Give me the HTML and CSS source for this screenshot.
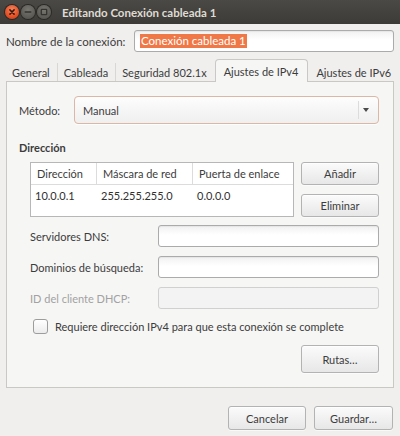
FILE: index.html
```html
<!DOCTYPE html>
<html lang="es">
<head>
<meta charset="utf-8">
<title>Editando Conexión cableada 1</title>
<link rel="stylesheet" href="styles.css">
</head>
<body>
<div class="window">
  <header class="titlebar">
    <div class="wbtns">
      <span class="wbtn close"><svg width="14" height="14" viewBox="0 0 14 14"><path d="M4.9 4.9l4.2 4.2M9.1 4.9l-4.2 4.2" stroke="#3a160a" stroke-width="1.5" stroke-linecap="round"/></svg></span>
      <span class="wbtn min"><svg width="14" height="14" viewBox="0 0 14 14"><path d="M4.3 7h5.4" stroke="#34332f" stroke-width="1.6" stroke-linecap="round"/></svg></span>
      <span class="wbtn max"><svg width="14" height="14" viewBox="0 0 14 14"><rect x="4.3" y="4.3" width="5.4" height="5.4" rx="0.6" fill="none" stroke="#34332f" stroke-width="1.3"/></svg></span>
    </div>
    <span class="title">Editando Conexión cableada 1</span>
  </header>

  <main class="content">
    <div class="namerow">
      <span class="lbl namelbl">Nombre de la conexión:</span>
      <div class="entry name"><span class="sel">Conexión cableada 1</span></div>
    </div>

    <nav class="tabs">
      <span class="tab">General</span>
      <span class="tab">Cableada</span>
      <span class="tab pre">Seguridad 802.1x</span>
      <span class="tab active">Ajustes de IPv4</span>
      <span class="tab last">Ajustes de IPv6</span>
    </nav>

    <section class="panel">
      <div class="method">
        <span class="lbl methodlbl">Método:</span>
        <div class="combo">
          <span class="combo-text">Manual</span>
          <span class="combo-btn"><svg width="6" height="4" viewBox="0 0 6 4"><path d="M0 0h6L3 4z" fill="#4a4a4a"/></svg></span>
        </div>
      </div>

      <h3 class="section-title">Dirección</h3>

      <div class="addr">
        <div class="table">
          <div class="thead">
            <span class="th">Dirección</span>
            <span class="th">Máscara de red</span>
            <span class="th">Puerta de enlace</span>
          </div>
          <div class="trow">
            <span class="td">10.0.0.1</span>
            <span class="td">255.255.255.0</span>
            <span class="td">0.0.0.0</span>
          </div>
        </div>
        <div class="side-btns">
          <button class="btn">Añadir</button>
          <button class="btn">Eliminar</button>
        </div>
      </div>

      <div class="form">
        <span class="lbl">Servidores DNS:</span>
        <div class="entry"></div>
        <span class="lbl">Dominios de búsqueda:</span>
        <div class="entry"></div>
        <span class="lbl disabled">ID del cliente DHCP:</span>
        <div class="entry off"></div>
      </div>

      <label class="check"><span class="box"></span><span>Requiere dirección IPv4 para que esta conexión se complete</span></label>

      <div class="routes"><button class="btn tall">Rutas…</button></div>
    </section>
  </main>

  <footer class="footer">
    <button class="btn foot">Cancelar</button>
    <button class="btn foot wide">Guardar…</button>
  </footer>
</div>
</body>
</html>
```

FILE: styles.css
```css
* { box-sizing: border-box; }
html, body { margin: 0; padding: 0; }
body {
  width: 400px;
  height: 436px;
  overflow: hidden;
  background: #f0efee;
  font-family: Lato, "Noto Sans", sans-serif;
  font-size: 11px;
  color: #3c3c3c;
}
.window {
  width: 400px;
  height: 436px;
  display: flex;
  flex-direction: column;
  background: #f0efee;
}

/* title bar */
.titlebar {
  height: 24px;
  flex: none;
  display: flex;
  align-items: center;
  padding-left: 5px;
  background: linear-gradient(#4a4945, #3c3b37);
}
.wbtns { display: flex; gap: 2px; align-items: center; }
.wbtn {
  width: 14px;
  height: 14px;
  border-radius: 50%;
  display: flex;
  align-items: center;
  justify-content: center;
}
.wbtn svg { display: block; }
.close {
  background: radial-gradient(circle at 50% 35%, #f6865d, #e0471d 70%, #c63a12);
  box-shadow: 0 0 0 1px #2a2925;
}
.min, .max {
  background: radial-gradient(circle at 50% 35%, #77766f, #5a5954 70%, #4e4d49);
  box-shadow: 0 0 0 1px #2a2925;
}
.title {
  margin-left: 11px;
  font-weight: bold;
  font-size: 11.5px;
  color: #dfdbd2;
  white-space: nowrap;
}

/* main */
.content { padding: 0 6px; flex: none; }
.namerow {
  display: flex;
  align-items: center;
  margin-top: 6px;
  height: 22px;
}
.namelbl { width: 128px; font-size: 11.5px; white-space: nowrap; }
.entry {
  height: 22px;
  border: 1px solid #ababab;
  border-radius: 3px;
  background: linear-gradient(#f1f1f1, #ffffff 45%);
  box-shadow: inset 0 1px 1px rgba(0,0,0,0.05);
  display: flex;
  align-items: center;
  padding-left: 5px;
}
.name { flex: 1; font-size: 11.5px; }
.sel {
  background: #f07746;
  color: #fff;
  line-height: 14px;
  padding: 0 1px;
  white-space: nowrap;
}

/* tabs */
.tabs {
  display: flex;
  align-items: flex-end;
  height: 22px;
  margin-top: 7px;
  position: relative;
  z-index: 1;
}
.tab {
  flex: none;
  white-space: nowrap;
  height: 18px;
  padding: 0 7px 0 6px;
  display: flex;
  align-items: center;
  border-right: 1px solid #d8d7d4;
}
.tab.pre, .tab.last { border-right: none; }
.tab.pre { padding-right: 8px; }
.tab.active {
  height: 23px;
  margin-bottom: -1px;
  padding: 1px 9px 0 8px;
  background: #f6f6f5;
  border: 1px solid #c9c8c5;
  border-bottom: none;
  border-radius: 4px 4px 0 0;
}
.tab.last { padding-left: 8px; }

/* panel */
.panel {
  height: 307px;
  border: 1px solid #c9c8c5;
  background: #f6f6f5;
  padding: 14px 14px 0 12px;
}
.method { display: flex; align-items: center; }
.methodlbl { width: 55px; }
.combo {
  flex: 1;
  height: 28px;
  display: flex;
  align-items: stretch;
  border: 1px solid #dbb7a6;
  border-radius: 4px;
  background: linear-gradient(#fdfdfd, #f0efef);
  box-shadow: 0 1px 0 rgba(255,255,255,0.8);
}
.combo-text {
  flex: 1;
  display: flex;
  align-items: center;
  padding-left: 8px;
}
.combo-btn {
  width: 20px;
  display: flex;
  align-items: center;
  padding-left: 4px;
  margin: 4px 0;
  border-left: 1px solid #dcdcdc;
}
.combo-btn svg { display: block; }

.section-title {
  margin: 16px 0 0;
  font-size: 11px;
  font-weight: bold;
  line-height: 16px;
}

.addr {
  display: flex;
  gap: 7px;
  margin: 6px 0 0 11px;
}
.table {
  width: 264px;
  height: 55px;
  border: 1px solid #b7b7b7;
  background: #fff;
}
.thead, .trow {
  display: grid;
  grid-template-columns: 66px 96px 1fr;
}
.thead { height: 22px; border-bottom: 1px solid #dcdcdc; }
.th {
  display: flex;
  align-items: center;
  padding-left: 6px;
  border-right: 1px solid #dcdcdc;
  white-space: nowrap;
}
.th:last-child { border-right: none; }
.trow { height: 20px; }
.td {
  display: flex;
  align-items: center;
  padding-left: 4px;
  color: #303030;
}

.side-btns { display: flex; flex-direction: column; gap: 9px; }
.btn {
  width: 78px;
  height: 23px;
  padding: 0;
  border: 1px solid #b3b3b3;
  border-radius: 3px;
  background: linear-gradient(#fbfbfb, #e7e7e7);
  box-shadow: inset 0 1px 0 rgba(255,255,255,0.7), 0 1px 0 rgba(255,255,255,0.6);
  font-family: inherit;
  font-size: 11px;
  color: #3c3c3c;
}
.btn.tall { height: 28px; }

.form {
  display: grid;
  grid-template-columns: 128px 1fr;
  row-gap: 9px;
  align-items: center;
  margin: 8px 0 0 11px;
}
.lbl.disabled { color: #a2a2a2; }
.entry.off {
  border-color: #d0d0d0;
  background: #f3f3f3;
  box-shadow: none;
}

.check {
  display: flex;
  align-items: center;
  gap: 7px;
  margin: 10px 0 0 14px;
}
.box {
  width: 15px;
  height: 15px;
  border: 1px solid #9d9d9d;
  border-radius: 3px;
  background: linear-gradient(#ffffff, #ececec);
}

.routes {
  display: flex;
  justify-content: flex-end;
  margin-top: 11px;
}

/* footer */
.footer {
  display: flex;
  justify-content: flex-end;
  gap: 8px;
  padding-right: 7px;
  margin-top: 18px;
}
.btn.foot { height: 24px; }
.btn.wide { width: 79px; }
```
